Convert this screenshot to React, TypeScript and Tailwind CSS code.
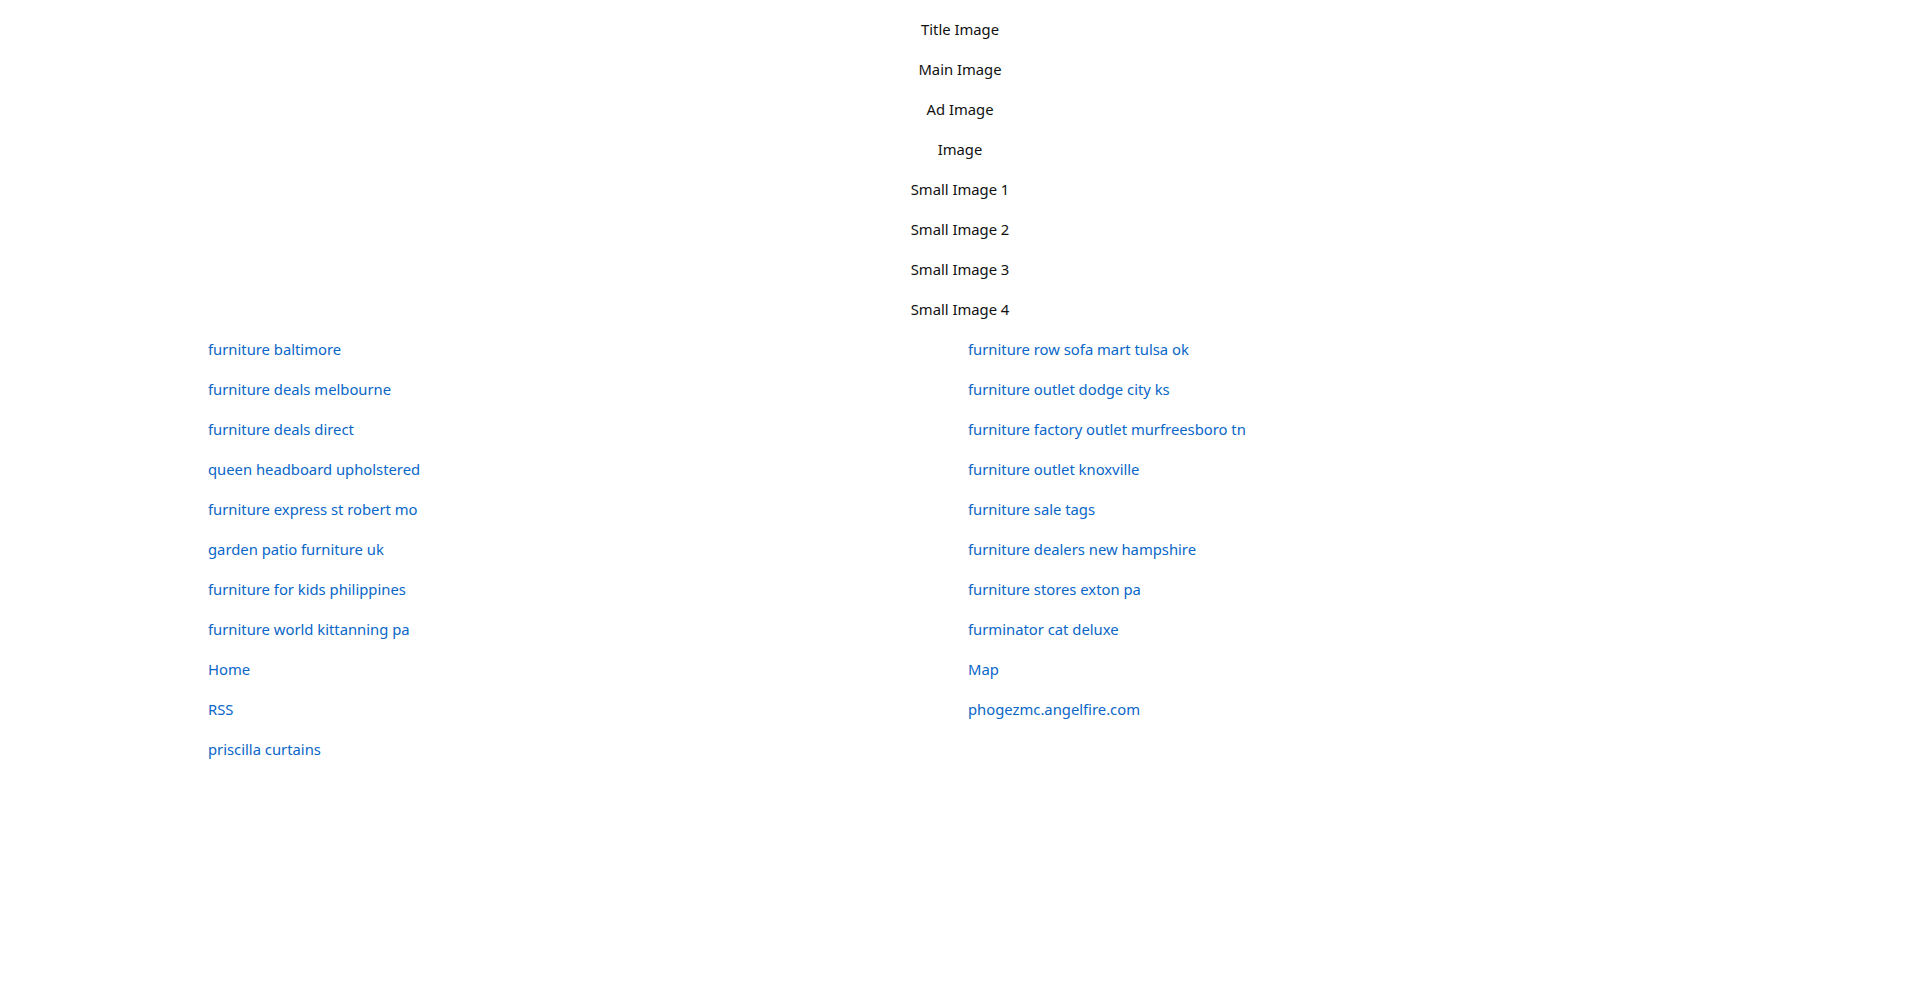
const headings = [
  "Title Image",
  "Main Image",
  "Ad Image",
  "Image",
  "Small Image 1",
  "Small Image 2",
  "Small Image 3",
  "Small Image 4",
];

const leftLinks = [
  "furniture baltimore",
  "furniture deals melbourne",
  "furniture deals direct",
  "queen headboard upholstered",
  "furniture express st robert mo",
  "garden patio furniture uk",
  "furniture for kids philippines",
  "furniture world kittanning pa",
  "Home",
  "RSS",
  "priscilla curtains",
];

const rightLinks = [
  "furniture row sofa mart tulsa ok",
  "furniture outlet dodge city ks",
  "furniture factory outlet murfreesboro tn",
  "furniture outlet knoxville",
  "furniture sale tags",
  "furniture dealers new hampshire",
  "furniture stores exton pa",
  "furminator cat deluxe",
  "Map",
  "phogezmc.angelfire.com",
];

export default function App() {
  return (
    <div className="min-h-screen bg-white pt-[9px] text-[14.8px] font-['Noto_Sans',sans-serif]">
      {/* image placeholders */}
      <div className="flex flex-col items-center">
        {headings.map((h, i) => (
          <div key={i} className="h-10 flex items-center text-[#111]">
            {h}
          </div>
        ))}
      </div>

      {/* link columns */}
      <div className="flex pl-[208px]">
        <div className="w-[760px] flex flex-col">
          {leftLinks.map((l, i) => (
            <a key={i} href="#" className="h-10 flex items-center text-[#0a66c8]">
              {l}
            </a>
          ))}
        </div>
        <div className="flex flex-col">
          {rightLinks.map((l, i) => (
            <a key={i} href="#" className="h-10 flex items-center text-[#0a66c8]">
              {l}
            </a>
          ))}
        </div>
      </div>
    </div>
  );
}
